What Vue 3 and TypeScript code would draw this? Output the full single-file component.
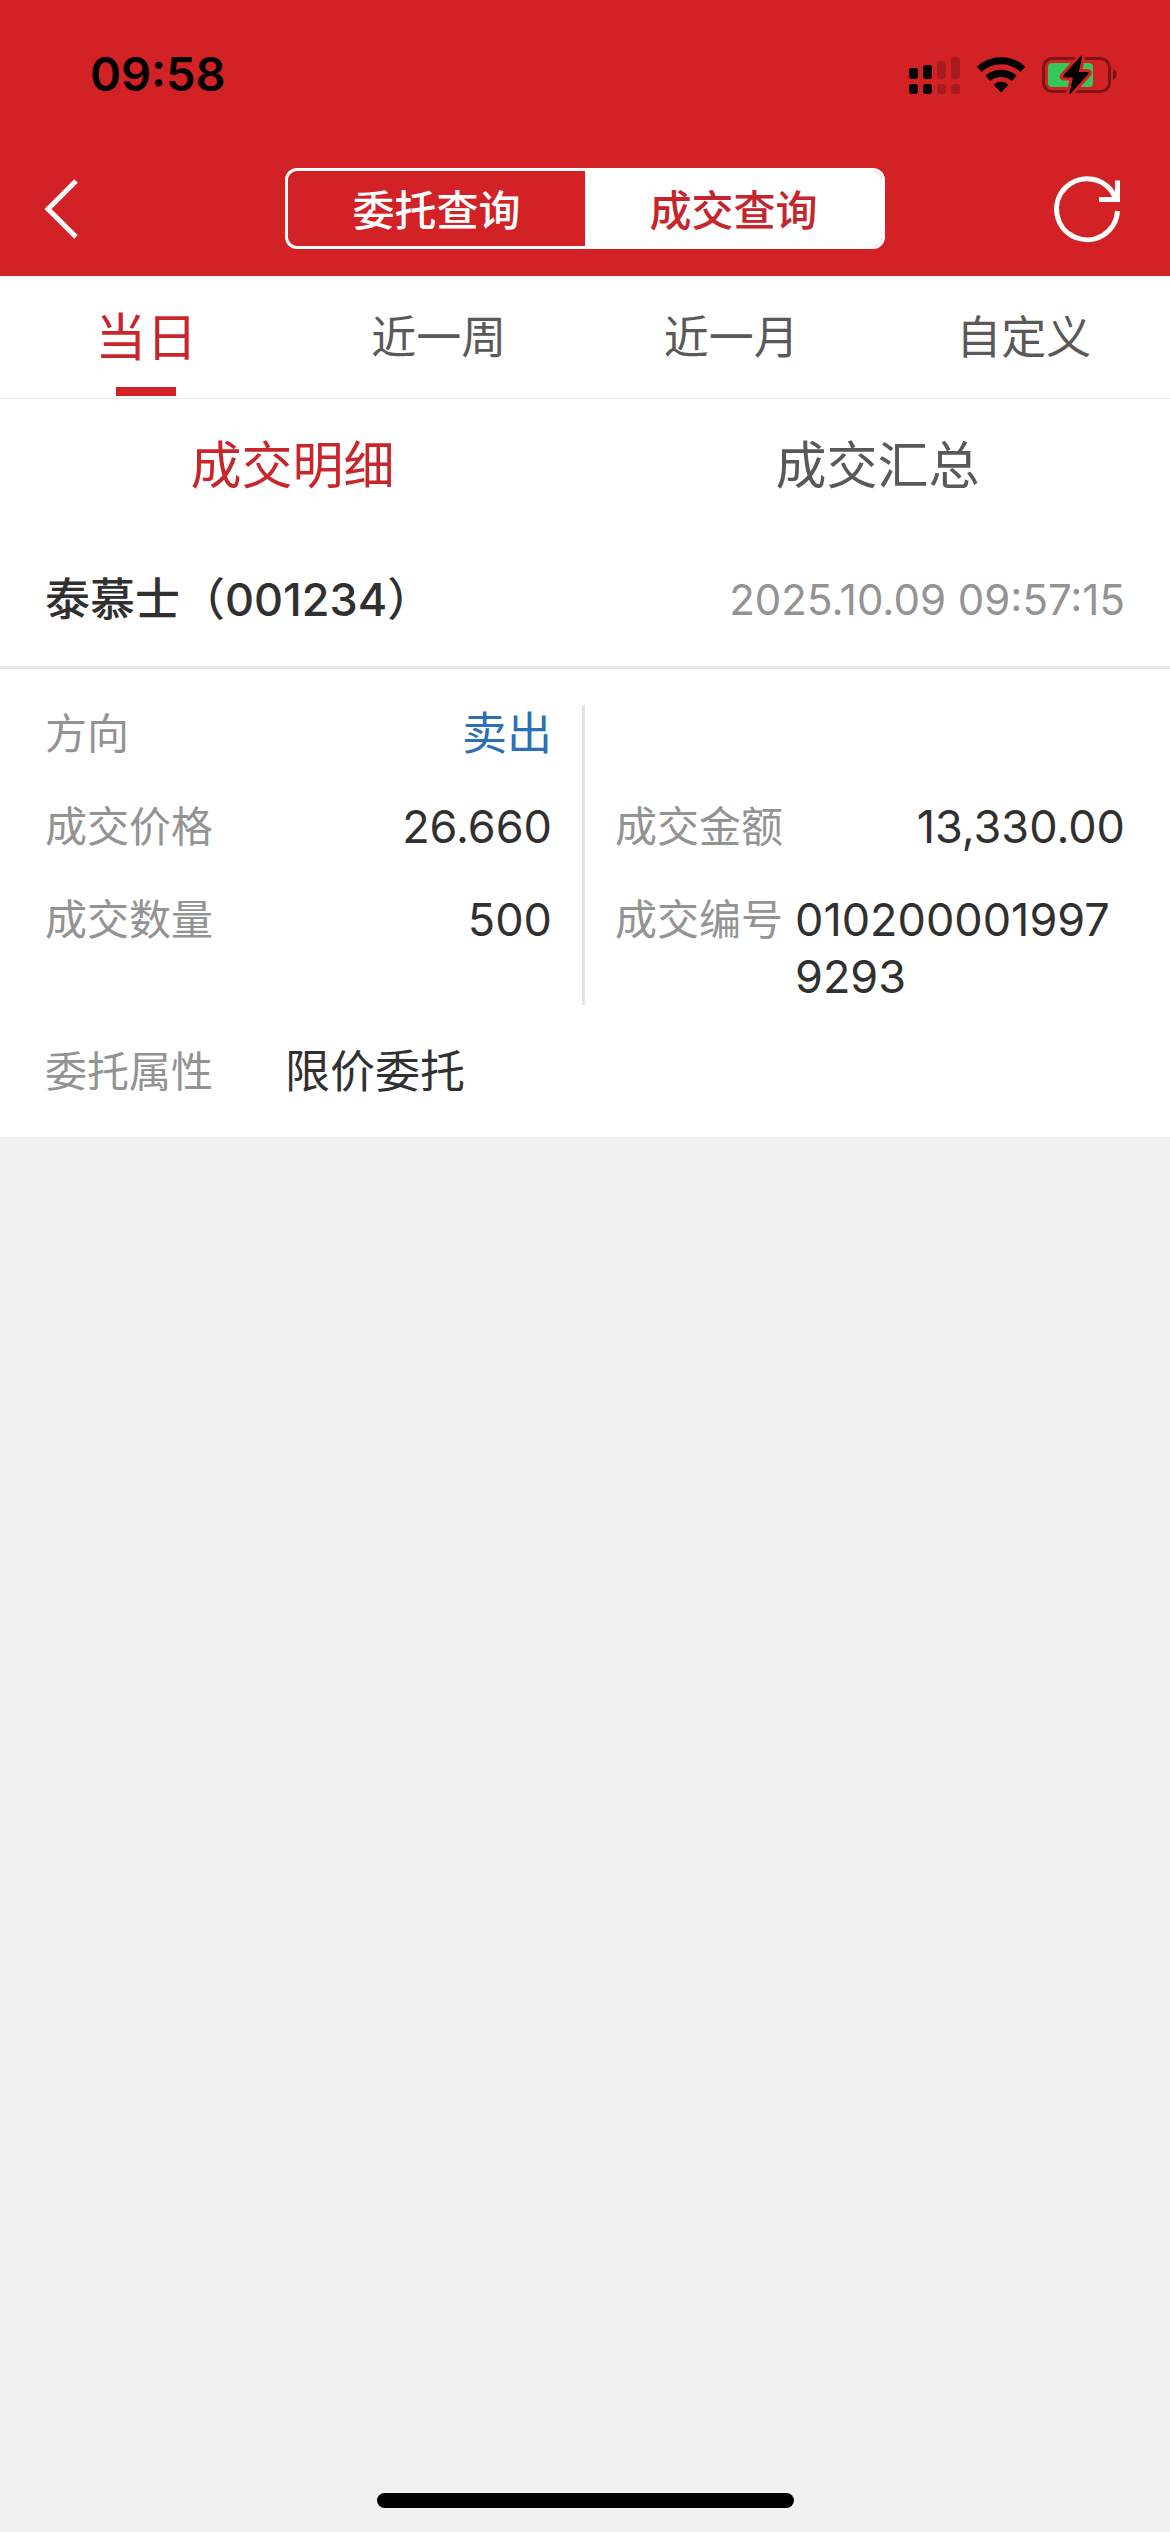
<script setup lang="ts">
import { ref } from 'vue'

interface Field {
  label: string
  value: string
  tone?: 'sell'
  long?: boolean
}

const modes = ['委托查询', '成交查询']
const activeMode = ref('成交查询')

const ranges = ['当日', '近一周', '近一月', '自定义']
const activeRange = ref('当日')

const views = ['成交明细', '成交汇总']
const activeView = ref('成交明细')

const leftFields: Field[] = [
  { label: '方向', value: '卖出', tone: 'sell' },
  { label: '成交价格', value: '26.660' },
  { label: '成交数量', value: '500' },
]

const rightFields: Field[] = [
  { label: '成交金额', value: '13,330.00' },
  { label: '成交编号', value: '0102000019979293', long: true },
]
</script>

<template>
  <div class="screen" lang="zh-CN">
    <header class="header">
      <div class="status">
        <time class="clock">09:58</time>
        <svg class="indicators" viewBox="0 0 212 42" aria-hidden="true">
          <g>
            <rect x="3" y="15" width="9" height="11" rx="3" />
            <rect x="3" y="31" width="9" height="10" rx="3" />
            <rect x="17" y="12" width="9" height="14" rx="3" />
            <rect x="17" y="31" width="9" height="10" rx="3" />
          </g>
          <g opacity="0.2">
            <rect x="31" y="8" width="9" height="18" rx="4" />
            <rect x="31" y="31" width="9" height="10" rx="3" />
            <rect x="45" y="4" width="9" height="22" rx="4" />
            <rect x="45" y="31" width="9" height="10" rx="3" />
          </g>
          <g fill="none" stroke="#000" stroke-width="7.2">
            <path d="M73.200 16.300a32 32 0 0 1 43.600 0" />
            <path d="M81.800 25.300a20 20 0 0 1 26.400 0" />
          </g>
          <path d="M95 39.500l-6.700-6.900a1 1 0 0 1 .1-1.400a10 10 0 0 1 13.200 0a1 1 0 0 1 .1 1.400z" />
          <rect x="137.500" y="5.500" width="66" height="33" rx="9" fill="none" stroke="#000" stroke-opacity="0.4" stroke-width="3" />
          <path d="M207 16a6 6 0 0 1 0 11z" fill-opacity="0.45" />
          <rect x="142" y="10" width="45" height="24" rx="4" fill="#34c759" />
          <path
            d="M175 2.800L157 22.800q-1 1.500 .8 1.700h9.200l-3.600 15.500q0 1.500 1.400 .6L182.400 20.800q1-1.500-.8-1.700h-8.800l3.400-15.500q0-1.500-1.200-.8z"
            stroke="#d22226"
            stroke-width="6"
            stroke-linejoin="round"
            paint-order="stroke"
          />
        </svg>
      </div>

      <div class="nav">
        <button class="icon-button" type="button" aria-label="返回">
          <svg width="36" height="60" viewBox="0 0 36 60" fill="none" stroke="#fff" stroke-width="5">
            <path d="M32 2L4 30L32 58" />
          </svg>
        </button>
        <div class="segmented">
          <button
            v-for="mode in modes"
            :key="mode"
            type="button"
            class="segment"
            :class="{ active: mode === activeMode }"
            :aria-pressed="mode === activeMode"
            @click="activeMode = mode"
          >
            {{ mode }}
          </button>
        </div>
        <button class="icon-button end" type="button" aria-label="刷新">
          <svg width="74" height="68" viewBox="0 0 74 68" fill="none" stroke="#fff" stroke-width="5">
            <path d="M65.500 36A30.500 30.500 0 1 1 63 22" />
            <path d="M65.500 5.500V24.500H47" />
          </svg>
        </button>
      </div>
    </header>

    <nav class="ranges">
      <button
        v-for="range in ranges"
        :key="range"
        type="button"
        class="range"
        :class="{ active: range === activeRange }"
        @click="activeRange = range"
      >
        {{ range }}
      </button>
    </nav>

    <nav class="views">
      <button
        v-for="view in views"
        :key="view"
        type="button"
        class="view"
        :class="{ active: view === activeView }"
        @click="activeView = view"
      >
        {{ view }}
      </button>
    </nav>

    <main class="content">
      <article class="deal">
        <div class="deal-head">
          <h2 class="stock">泰慕士（001234）</h2>
          <time class="stamp">2025.10.09 09:57:15</time>
        </div>
        <div class="deal-body">
          <div class="columns">
            <dl class="column left">
              <div v-for="field in leftFields" :key="field.label" class="field">
                <dt>{{ field.label }}</dt>
                <dd :class="field.tone">{{ field.value }}</dd>
              </div>
            </dl>
            <dl class="column right">
              <div v-for="field in rightFields" :key="field.label" class="field">
                <dt>{{ field.label }}</dt>
                <dd :class="{ long: field.long }">{{ field.value }}</dd>
              </div>
            </dl>
          </div>
          <dl class="attribute">
            <dt>委托属性</dt>
            <dd>限价委托</dd>
          </dl>
        </div>
      </article>
    </main>

    <div class="home-indicator"></div>
  </div>
</template>

<style>
body {
  margin: 0;
  background: #f1f1f1;
}
</style>

<style scoped>
.screen {
  display: flex;
  flex-direction: column;
  min-height: 100vh;
  font-family: Inter, 'Noto Sans CJK SC', sans-serif;
  color: #303030;
  background: #f1f1f1;
}

button {
  margin: 0;
  padding: 0;
  border: 0;
  background: none;
  font: inherit;
  color: inherit;
  cursor: pointer;
}

dl,
dd,
h2 {
  margin: 0;
}

.header {
  background: #d22226;
}

.status {
  display: flex;
  align-items: center;
  justify-content: space-between;
  height: 141px;
  padding: 6px 52px 0 90px;
  box-sizing: border-box;
}

.clock {
  font-size: 47px;
  font-weight: 600;
  line-height: 57px;
  color: #000;
}

.indicators {
  width: 212px;
  height: 42px;
}

.nav {
  display: flex;
  align-items: center;
  justify-content: space-between;
  height: 135px;
  padding: 0 44px;
}

.icon-button {
  display: flex;
  flex: 1;
}

.icon-button.end {
  justify-content: flex-end;
}

.segmented {
  display: flex;
  width: 600px;
  height: 81px;
  box-sizing: border-box;
  border: 3px solid #fff;
  border-radius: 12px;
  overflow: hidden;
}

.segment {
  flex: 1;
  padding-bottom: 3px;
  font-size: 42px;
  font-weight: 500;
  color: #fff;
}

.segment.active {
  background: #fff;
  color: #c4262b;
}

.ranges {
  display: flex;
  height: 122px;
  background: #fff;
  border-bottom: 1px solid #e4e4e4;
}

.range {
  position: relative;
  flex: 1;
  padding-bottom: 6px;
  font-size: 45px;
  color: #595959;
}

.range.active {
  font-size: 51px;
  color: #c8262b;
}

.range.active::after {
  content: '';
  position: absolute;
  left: 50%;
  bottom: 2px;
  width: 60px;
  height: 9px;
  margin-left: -30px;
  background: #d22226;
}

.views {
  display: flex;
  height: 132px;
  background: #fff;
}

.view {
  flex: 1;
  padding-bottom: 6px;
  font-size: 51px;
  color: #595959;
}

.view.active {
  color: #c8262b;
}

.deal {
  background: #fff;
}

.deal-head {
  display: flex;
  align-items: center;
  justify-content: space-between;
  height: 138px;
  padding: 2px 45px 0;
  box-sizing: border-box;
  border-bottom: 3px solid #e8e8e8;
}

.stock {
  font-size: 45px;
  font-weight: 500;
  line-height: 57px;
}

.stamp {
  font-size: 42px;
  line-height: 57px;
  color: #939393;
}

.deal-body {
  padding: 36px 45px 37px;
}

.columns {
  display: grid;
  grid-template-columns: 1fr 1fr;
}

.column {
  display: flex;
  flex-direction: column;
  gap: 36px;
}

.left {
  padding-right: 30px;
  border-right: 3px solid #e4e4e4;
}

.right {
  padding: 93px 0 0 30px;
}

.field {
  display: flex;
  justify-content: space-between;
  gap: 12px;
}

dt {
  flex: none;
  font-size: 42px;
  line-height: 57px;
  color: #939393;
}

dd {
  font-size: 45px;
  line-height: 57px;
}

.long {
  flex: 1;
  word-break: break-all;
}

.sell {
  color: #2b70b5;
}

.attribute {
  display: flex;
  gap: 72px;
  margin-top: 38px;
}

.home-indicator {
  width: 417px;
  max-width: 60%;
  height: 15px;
  margin: auto auto 24px;
  border-radius: 8px;
  background: #000;
}
</style>
